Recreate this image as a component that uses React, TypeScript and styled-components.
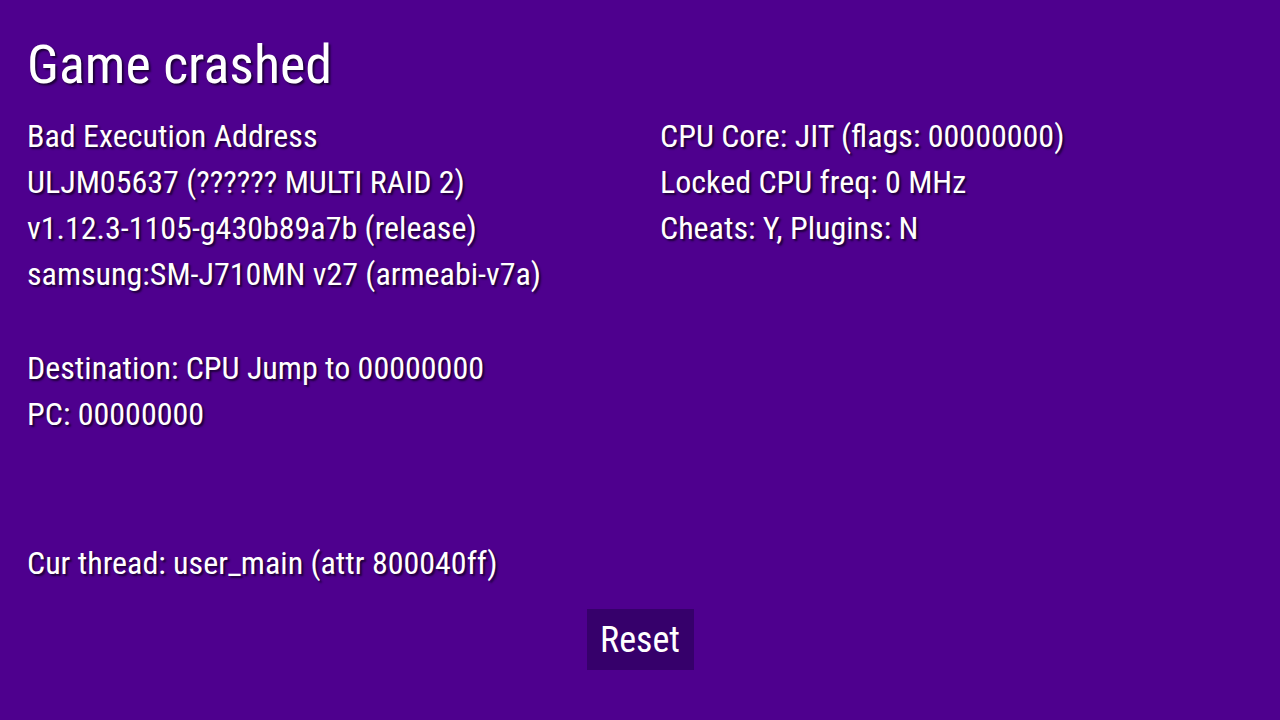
import styled, { createGlobalStyle } from "styled-components";

const Global = createGlobalStyle`
    html, body {
        margin: 0;
        padding: 0;
        background: #4e008e;
    }
`;

const Screen = styled.div`
    width: 1280px;
    height: 720px;
    box-sizing: border-box;
    padding: 35px 27px 0 27px;
    display: flex;
    flex-direction: column;
    background: #4e008e;
    color: #fff;
    font-family: Roboto, "Noto Sans", sans-serif;
    font-stretch: 75%;
    text-shadow: 2px 2px 2px rgba(20, 0, 40, 0.85);
    overflow: hidden;
`;

const Title = styled.h1`
    margin: 0;
    font-size: 54px;
    font-weight: 400;
    line-height: 60px;
`;

const Columns = styled.div`
    display: grid;
    grid-template-columns: 633px 1fr;
    margin-top: 18px;
`;

const Column = styled.div`
    display: flex;
    flex-direction: column;
`;

const Line = styled.div<{ $gapAbove?: number }>`
    font-size: 32px;
    line-height: 46px;
    white-space: nowrap;
    margin-top: ${(p) => p.$gapAbove ?? 0}px;
`;

const Footer = styled.div`
    display: flex;
    justify-content: center;
    margin-top: 23px;
`;

const ResetButton = styled.button`
    width: 107px;
    height: 61px;
    border: none;
    background: #36006b;
    color: #fff;
    font-family: Roboto, "Noto Sans", sans-serif;
    font-stretch: 75%;
    font-size: 36px;
    padding: 0;
    cursor: pointer;
`;

export default function App() {
    return <Screen>
        <Global />
        <Title>Game crashed</Title>
        <Columns>
            <Column>
                <Line>Bad Execution Address</Line>
                <Line>ULJM05637 (?????? MULTI RAID 2)</Line>
                <Line>v1.12.3-1105-g430b89a7b (release)</Line>
                <Line>samsung:SM-J710MN v27 (armeabi-v7a)</Line>
                <Line $gapAbove={48}>Destination: CPU Jump to 00000000</Line>
                <Line>PC: 00000000</Line>
                <Line $gapAbove={103}>Cur thread: user_main (attr 800040ff)</Line>
            </Column>
            <Column>
                <Line>CPU Core: JIT (flags: 00000000)</Line>
                <Line>Locked CPU freq: 0 MHz</Line>
                <Line>Cheats: Y, Plugins: N</Line>
            </Column>
        </Columns>
        <Footer>
            <ResetButton>Reset</ResetButton>
        </Footer>
    </Screen>
}
